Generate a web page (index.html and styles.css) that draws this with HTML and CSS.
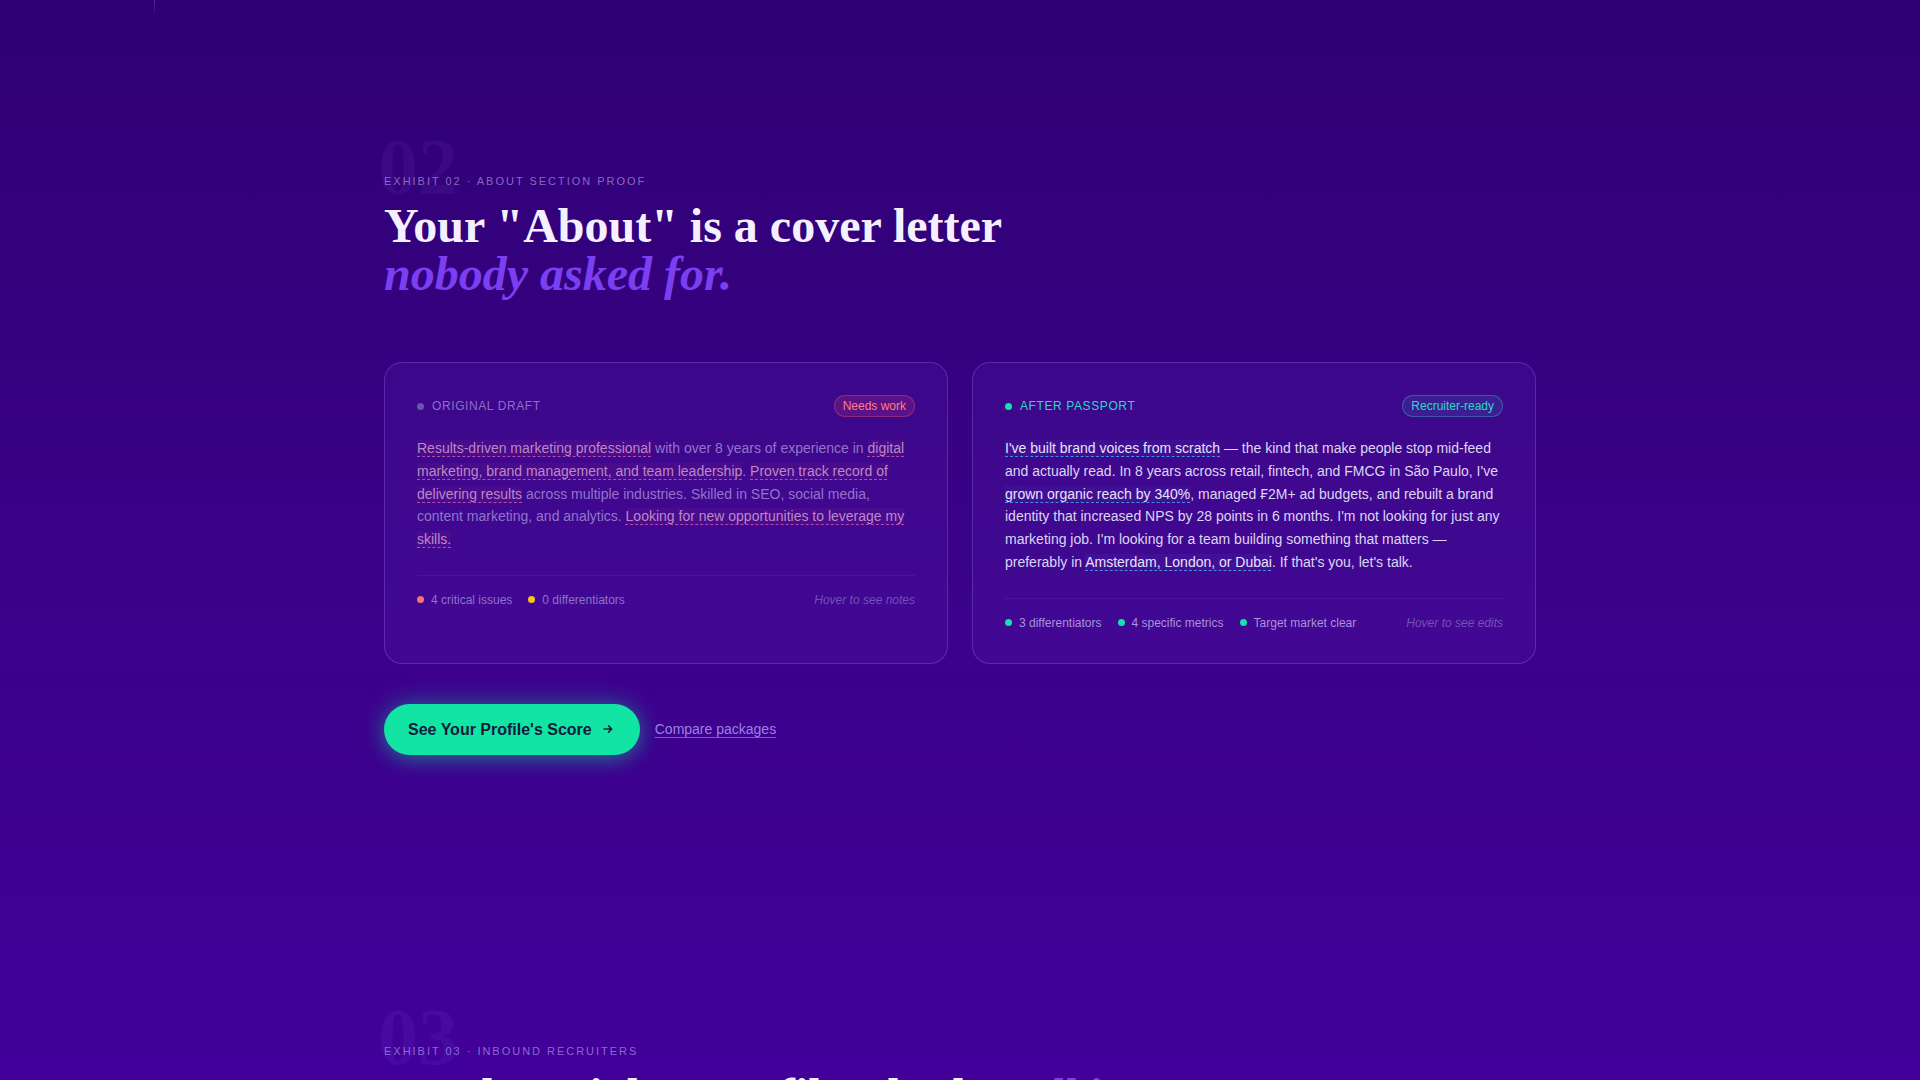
FILE: index.html
```html
<!DOCTYPE html>
<html lang="en">
<head>
<meta charset="utf-8">
<title>Exhibit 02 · About Section Proof</title>
<link rel="stylesheet" href="styles.css">
</head>
<body>
<div class="prev-tail"><span class="tail-line"></span></div>

<section class="exhibit">
  <div class="wrap">
    <div class="eyebrow-row">
      <span class="big-num" aria-hidden="true">02</span>
      <p class="eyebrow">Exhibit 02 · About section proof</p>
    </div>
    <h2 class="title">Your "About" is a cover letter <em>nobody asked for.</em></h2>

    <div class="compare">
      <article class="card card-before">
        <header class="card-head">
          <span class="card-label"><span class="dot dot-muted"></span>Original draft</span>
          <span class="pill pill-bad">Needs work</span>
        </header>
        <p class="card-text"><span class="flag">Results-driven marketing professional</span> with over 8 years of experience in <span class="flag">digital marketing, brand management, and team leadership</span>. <span class="flag">Proven track record of delivering results</span> across multiple industries. Skilled in SEO, social media, content marketing, and analytics. <span class="flag">Looking for new opportunities to leverage my skills.</span></p>
        <footer class="card-foot">
          <ul class="stats">
            <li><span class="dot dot-red"></span>4 critical issues</li>
            <li><span class="dot dot-amber"></span>0 differentiators</li>
          </ul>
          <span class="hint">Hover to see notes</span>
        </footer>
      </article>

      <article class="card card-after">
        <header class="card-head">
          <span class="card-label label-good"><span class="dot dot-green"></span>After Passport</span>
          <span class="pill pill-good">Recruiter-ready</span>
        </header>
        <p class="card-text"><span class="mark">I've built brand voices from scratch</span> — the kind that make people stop mid-feed and actually read. In 8 years across retail, fintech, and FMCG in São Paulo, I've <span class="mark">grown organic reach by 340%</span>, managed ₣2M+ ad budgets, and rebuilt a brand identity that increased NPS by 28 points in 6 months. I'm not looking for just any marketing job. I'm looking for a team building something that matters — preferably in <span class="mark">Amsterdam, London, or Dubai</span>. If that's you, let's talk.</p>
        <footer class="card-foot">
          <ul class="stats stats-good">
            <li><span class="dot dot-green"></span>3 differentiators</li>
            <li><span class="dot dot-green"></span>4 specific metrics</li>
            <li><span class="dot dot-green"></span>Target market clear</li>
          </ul>
          <span class="hint">Hover to see edits</span>
        </footer>
      </article>
    </div>

    <div class="actions">
      <a class="btn-primary" href="#score">See Your Profile's Score
        <svg class="arrow" viewBox="0 0 24 24" width="12" height="12" aria-hidden="true"><path d="M4 12h15M13 5.5l6.5 6.5-6.5 6.5" fill="none" stroke="currentColor" stroke-width="3" stroke-linecap="round" stroke-linejoin="round"/></svg>
      </a>
      <a class="link" href="#packages">Compare packages</a>
    </div>
  </div>
</section>

<section class="exhibit">
  <div class="wrap">
    <div class="eyebrow-row">
      <span class="big-num" aria-hidden="true">03</span>
      <p class="eyebrow">Exhibit 03 · Inbound recruiters</p>
    </div>
    <h2 class="title title-inline">Let the "right" profiles do the <em>talking.</em></h2>
  </div>
</section>
</body>
</html>
```

FILE: styles.css
```css
* { box-sizing: border-box; }

html, body { margin: 0; padding: 0; }

body {
  font-family: "Liberation Sans", Arial, sans-serif;
  color: #ece6ff;
  background: linear-gradient(180deg, #2f0073 0px, #3a0288 560px, #42009a 1080px) no-repeat, #43009c;
  background-size: 100% 1080px;
  min-height: 1080px;
}

.prev-tail {
  position: relative;
  height: 29px;
}

.tail-line {
  position: absolute;
  left: 154px;
  top: 0;
  width: 1px;
  height: 16px;
  background: linear-gradient(180deg, rgba(180, 160, 255, 0.28), rgba(180, 160, 255, 0));
}

.exhibit {
  padding: 144px 0;
}

.wrap {
  width: 1152px;
  margin: 0 auto;
}

.eyebrow-row {
  position: relative;
}

.big-num {
  position: absolute;
  left: -6px;
  top: -46px;
  font-family: "Liberation Serif", "Times New Roman", serif;
  font-size: 80px;
  line-height: 1;
  font-weight: 700;
  color: rgba(150, 110, 255, 0.08);
  pointer-events: none;
}

.eyebrow {
  position: relative;
  margin: 0 0 13px;
  font-size: 11px;
  line-height: 16px;
  letter-spacing: 0.18em;
  text-transform: uppercase;
  color: rgba(190, 172, 240, 0.62);
}

.title {
  margin: 0;
  font-family: "Liberation Serif", "Times New Roman", serif;
  font-weight: 700;
  font-size: 48px;
  line-height: 1;
  letter-spacing: 0;
  color: #f5f0ff;
}

.title em {
  display: block;
  font-style: italic;
  color: #7b3ff2;
}

.title-inline em { display: inline; }

.compare {
  display: grid;
  grid-template-columns: 1fr 1fr;
  gap: 24px;
  margin-top: 64px;
}

.card {
  padding: 32px;
  border-radius: 18px;
  border: 1px solid rgba(170, 140, 255, 0.26);
  background: rgba(120, 70, 230, 0.1);
}

.card-head {
  display: flex;
  align-items: center;
  justify-content: space-between;
  height: 22px;
  margin-bottom: 20px;
}

.card-label {
  display: flex;
  align-items: center;
  gap: 8px;
  font-size: 12px;
  letter-spacing: 0.05em;
  text-transform: uppercase;
  color: rgba(175, 160, 225, 0.7);
}

.label-good { color: #2fd6c6; }

.dot {
  display: inline-block;
  width: 7px;
  height: 7px;
  border-radius: 50%;
  flex: none;
}

.dot-muted { background: #6a55a8; }
.dot-red { background: #f97373; }
.dot-amber { background: #f8c41c; }
.dot-green { background: #12e2ac; }

.pill {
  display: inline-flex;
  align-items: center;
  height: 22px;
  padding: 0 8px;
  border-radius: 999px;
  font-size: 12px;
}

.pill-bad {
  color: #ff7d8a;
  background: rgba(240, 80, 110, 0.16);
  border: 1px solid rgba(240, 90, 120, 0.32);
}

.pill-good {
  color: #2fd6c6;
  background: rgba(40, 200, 200, 0.12);
  border: 1px solid rgba(60, 200, 210, 0.35);
}

.card-text {
  margin: 0;
  font-size: 14px;
  line-height: 1.625;
}

.card-before .card-text { color: rgba(190, 172, 235, 0.68); }

.card-after .card-text { color: #ddd5f4; }

.flag {
  color: rgba(220, 170, 215, 0.8);
  background: rgba(240, 80, 140, 0.06);
  text-decoration: underline dashed rgba(230, 92, 190, 0.75);
  text-decoration-thickness: 1px;
  text-underline-offset: 3px;
}

.mark {
  color: #e8e2fb;
  background: rgba(90, 150, 255, 0.06);
  text-decoration: underline dashed rgba(70, 175, 250, 0.8);
  text-decoration-thickness: 1px;
  text-underline-offset: 3px;
}

.card-foot {
  display: flex;
  align-items: center;
  justify-content: space-between;
  margin-top: 24px;
  padding-top: 16px;
  border-top: 1px solid rgba(170, 140, 255, 0.1);
  font-size: 12px;
  line-height: 16px;
}

.stats {
  display: flex;
  gap: 16px;
  margin: 0;
  padding: 0;
  list-style: none;
  color: rgba(170, 152, 220, 0.75);
}

.stats-good { color: rgba(190, 175, 235, 0.85); }

.stats li {
  display: flex;
  align-items: center;
  gap: 7px;
}

.hint {
  font-style: italic;
  color: rgba(140, 115, 200, 0.7);
}

.actions {
  display: flex;
  align-items: center;
  gap: 15px;
  margin-top: 40px;
}

.btn-primary {
  display: inline-flex;
  align-items: center;
  gap: 10px;
  padding: 16px 26px 16px 24px;
  border-radius: 999px;
  background: #12e4a4;
  color: #101c3c;
  font-size: 16px;
  line-height: 19px;
  font-weight: 700;
  text-decoration: none;
  box-shadow: 0 0 26px rgba(18, 228, 164, 0.38), 0 6px 18px rgba(10, 180, 140, 0.25);
}

.arrow { display: block; }

.link {
  font-size: 14px;
  color: #9c80e6;
  text-decoration: underline;
  text-decoration-color: rgba(156, 128, 230, 0.7);
  text-underline-offset: 3px;
}
```
